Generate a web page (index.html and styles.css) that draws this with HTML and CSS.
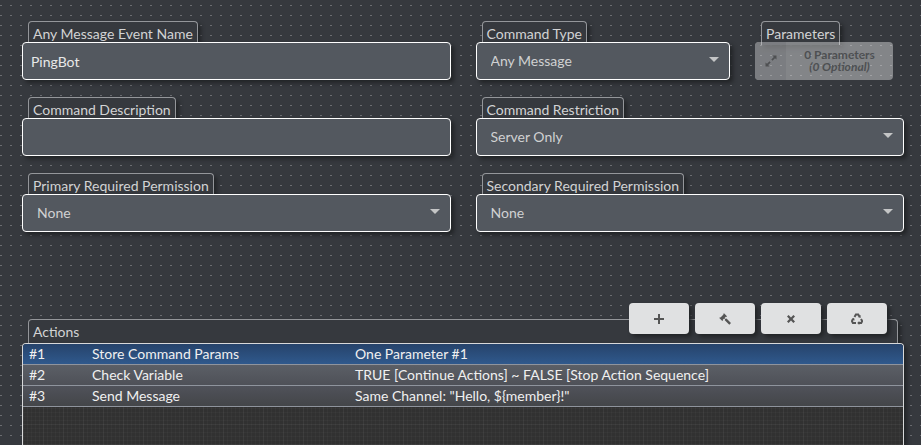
FILE: index.html
```html
<!DOCTYPE html>
<html lang="en">
<head>
<meta charset="utf-8">
<title>Commands</title>
<link rel="stylesheet" href="styles.css">
</head>
<body>
<main class="editor">
  <form class="form">
    <div class="field">
      <label class="tab" for="name">Any Message Event Name</label>
      <input class="box" id="name" type="text" value="PingBot">
    </div>
    <div class="split">
      <div class="field">
        <label class="tab" for="type">Command Type</label>
        <div class="select"><select class="box" id="type"><option>Any Message</option></select></div>
      </div>
      <div class="field">
        <label class="tab" for="params">Parameters</label>
        <button class="params" id="params" type="button" disabled>
          <span class="params-icon"><svg width="12" height="12" viewBox="0 0 12 12"><path d="M7.500 0.500h4v4l-1.500-1.300-2.500 2.500-1.200-1.200L8.800 2zM4.500 11.500h-4v-4l1.500 1.300 2.500-2.500 1.200 1.200L3.200 10z"/></svg></span>
          <span class="params-text">0 Parameters<br><i>(0 Optional)</i></span>
        </button>
      </div>
    </div>
    <div class="field">
      <label class="tab" for="description">Command Description</label>
      <input class="box" id="description" type="text">
    </div>
    <div class="field">
      <label class="tab" for="restriction">Command Restriction</label>
      <div class="select"><select class="box" id="restriction"><option>Server Only</option></select></div>
    </div>
    <div class="field">
      <label class="tab" for="primary">Primary Required Permission</label>
      <div class="select"><select class="box" id="primary"><option>None</option></select></div>
    </div>
    <div class="field">
      <label class="tab" for="secondary">Secondary Required Permission</label>
      <div class="select"><select class="box" id="secondary"><option>None</option></select></div>
    </div>
  </form>

  <section class="actions">
    <header class="actions-head">
      <span>Actions</span>
      <div class="toolbar">
        <button class="tool" type="button" aria-label="Add"><svg width="12" height="12" viewBox="0 0 12 12"><path d="M5 1h2v4h4v2H7v4H5V7H1V5h4z"/></svg></button>
        <button class="tool" type="button" aria-label="Edit"><svg width="12" height="12" viewBox="0 0 12 12"><path d="M5 .3 8 3.300 7.300 4 6.800 3.800 5.600 5l1 1 .9-.5L12 10l-1.700 1.800L5.800 7.300l.3-.8-.9-.9L3.800 6.800 4 7.300l-.7.7L.3 5 1 4.300l.5.2 3-3L4.300 1z"/></svg></button>
        <button class="tool" type="button" aria-label="Delete"><svg width="12" height="12" viewBox="0 0 12 12"><path d="m3.600 2 2.400 2.400L8.400 2 10 3.600 7.600 6 10 8.400 8.400 10 6 7.600 3.600 10 2 8.400 4.400 6 2 3.600z"/></svg></button>
        <button class="tool" type="button" aria-label="Clear"><svg width="12" height="12" viewBox="0 0 12 12"><path class="line" d="M3.500 4 4.900 1.500h2.300L8.300 3.300M10 6l1.200 2.100-1 1.900H8M5 10H1.900L.9 8.100l1.300-2.300"/><path d="M9.600 2v3l-2.900-.9zM8.300 8v4L6.200 10zM.5 6.400 3 4.700l.7 2.900z"/></svg></button>
      </div>
    </header>
    <div class="list">
      <table class="rows">
        <tbody>
          <tr class="selected"><td class="num">#1</td><td class="kind">Store Command Params</td><td>One Parameter #1</td></tr>
          <tr class="upper"><td class="num">#2</td><td class="kind">Check Variable</td><td>TRUE [Continue Actions] ~ FALSE [Stop Action Sequence]</td></tr>
          <tr class="lower"><td class="num">#3</td><td class="kind">Send Message</td><td>Same Channel: "Hello, ${member}!"</td></tr>
        </tbody>
      </table>
    </div>
  </section>
</main>
</body>
</html>
```
FILE: styles.css
```css
* { box-sizing: border-box; }

body {
  margin: 0;
  font: 14px/20px Lato, sans-serif;
  color: #d2d3d4;
  background-color: #36393e;
  background-image: conic-gradient(at 2px 1px, transparent 270deg, #6b6d71 270deg);
  background-size: 10px 10px;
  background-position: 0 5px;
}

.editor {
  display: flex;
  flex-direction: column;
  min-height: 100vh;
  padding: 21px 17px 0 22px;
}

.form {
  display: grid;
  grid-template-columns: 1fr 1fr;
  gap: 17px 25px;
}

.field {
  display: flex;
  flex-direction: column;
  align-items: flex-start;
}

.split {
  display: grid;
  grid-template-columns: 1fr 138px;
  gap: 25px;
  padding-right: 11px;
}

.tab {
  height: 24px;
  margin: 0 0 -3px 6px;
  padding: 1px 4px;
  line-height: 22px;
  border: 1px solid #94969a;
  border-bottom: 0;
  border-radius: 4px 4px 0 0;
  background: #36393e;
  box-shadow: 3px 3px 4px #222427;
}

.box {
  position: relative;
  display: block;
  width: 100%;
  height: 38px;
  margin: 0;
  padding: 0 8px;
  font: inherit;
  color: #e8e8e8;
  border: 1px solid #fff;
  border-radius: 4px;
  background: #53585f;
  box-shadow: 3px 3px 4px #222427;
  outline: 0;
}

.select { position: relative; width: 100%; }

.select .box {
  padding: 0 14px;
  color: #d0d1d2;
  appearance: none;
}

.select::after {
  content: "";
  position: absolute;
  top: 15px;
  right: 11px;
  border: 5px solid transparent;
  border-top-color: #c4c5c6;
  border-bottom: 0;
}

.params {
  position: relative;
  display: flex;
  width: 100%;
  height: 38px;
  padding: 0;
  font: bold 12px/12px Lato, sans-serif;
  color: #6c6c6c;
  border: 0;
  border-radius: 4px;
  overflow: hidden;
  background: #e0e1e2;
  opacity: .45;
}

.params-icon {
  display: grid;
  place-items: center;
  width: 31px;
  height: 38px;
  background: #d0d1d2;
}

.params-text { flex: 1; align-self: center; }

svg { display: block; fill: currentColor; }

.line { fill: none; stroke: currentColor; stroke-width: 2; }

.actions {
  display: flex;
  flex: 1;
  flex-direction: column;
  margin-top: 87px;
}

.actions-head {
  position: relative;
  height: 26px;
  margin: 0 6px -2px;
  padding: 0 4px;
  line-height: 24px;
  border: 1px solid #94969a;
  border-bottom: 0;
  border-radius: 4px 4px 0 0;
  background: #36393e;
  box-shadow: 3px 3px 4px #222427;
}

.toolbar {
  position: absolute;
  top: -17px;
  right: 10px;
  display: flex;
  gap: 6px;
}

.tool {
  display: grid;
  place-items: center;
  width: 60px;
  height: 31px;
  padding: 0;
  color: #555;
  border: 0;
  border-radius: 4px;
  background: #e0e1e2;
  box-shadow: 3px 3px 4px #222427;
}

.list {
  position: relative;
  flex: 1;
  border: 1px solid #d8d9da;
  border-bottom: 0;
  border-radius: 4px 4px 0 0;
  overflow: hidden;
  background-color: #313131;
  background-image:
    repeating-linear-gradient(90deg, #ffffff08 0 1px, transparent 1px 20px),
    repeating-linear-gradient(#ffffff08 0 1px, transparent 1px 20px),
    repeating-linear-gradient(90deg, #ffffff06 0 1px, transparent 1px 4px),
    repeating-linear-gradient(#ffffff06 0 1px, transparent 1px 4px);
  box-shadow: 3px 3px 4px #222427;
}

.rows {
  width: 100%;
  border-spacing: 0;
  table-layout: fixed;
  color: #f0f0f0;
}

.rows td {
  height: 21px;
  padding: 0 6px;
  white-space: nowrap;
  border-bottom: 1px solid #8f949d;
}

.rows .num { width: 63px; }
.rows .kind { width: 263px; }
.selected { background: linear-gradient(#26436b, #305a8e); }
.upper { background: linear-gradient(#5b5f66, #4e5057); }
.lower { background: linear-gradient(#50525a, #434548); }
```
